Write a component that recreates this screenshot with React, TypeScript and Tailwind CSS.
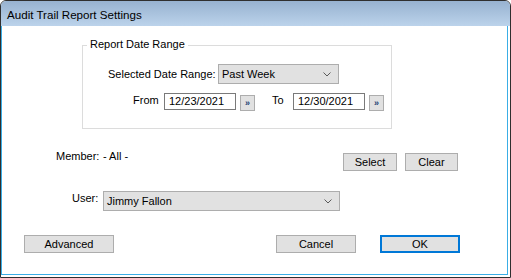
import React from "react";

function Chevron() {
  return (
    <svg width="8" height="5" viewBox="0 0 8 5" className="shrink-0">
      <path d="M0.5 0.5 L4 4 L7.5 0.5" fill="none" stroke="#5a5a5a" strokeWidth="1" />
    </svg>
  );
}

type SelectBoxProps = { value: string; width: string };

function SelectBox({ value, width }: SelectBoxProps) {
  return (
    <div
      className={`flex h-[20px] ${width} items-center justify-between border border-[#adadad] bg-[#e1e1e1] pl-[3px] pr-[7px]`}
    >
      <span className="leading-[13px]">{value}</span>
      <Chevron />
    </div>
  );
}

function DateInput({ value }: { value: string }) {
  return (
    <div className="flex h-[17px] w-[72px] items-center border border-[#7a7a7a] bg-white pl-[4px]">
      <span className="leading-[13px]">{value}</span>
    </div>
  );
}

function PickButton() {
  return (
    <div className="ml-[4px] mt-[2px] flex h-[16px] w-[15px] items-center justify-center border border-[#adadad] bg-[#e1e1e1]">
      <span className="text-[9px] font-bold leading-none text-[#1d3d73]">»</span>
    </div>
  );
}

type ButtonProps = { label: string; width: string; primary?: boolean };

function DlgButton({ label, width, primary }: ButtonProps) {
  return (
    <button
      type="button"
      className={`flex h-[18px] ${width} items-center justify-center bg-[#e1e1e1] leading-[13px] ${
        primary ? "border-2 border-[#0078d7]" : "border border-[#adadad]"
      }`}
    >
      {label}
    </button>
  );
}

export default function App() {
  return (
    <div className="h-[278px] w-[511px] overflow-hidden rounded-t-[6px] border border-[#2f2f2f] bg-white font-['Liberation_Sans',Arial,sans-serif] text-[11px] text-black">
      <div className="flex h-[25px] items-center bg-gradient-to-b from-[#97b2d0] to-[#bcd3eb] pl-[6px] pt-[2px]">
        <span className="text-[11.6px] leading-[14px]">Audit Trail Report Settings</span>
      </div>

      <div className="mb-[2px] mr-[2px] flex h-[249px] flex-col border-x border-b border-[#3aaee6]">
        {/* date range group */}
        <div className="relative ml-[80px] mt-[19px] h-[84px] w-[310px] border border-[#dcdcdc]">
          <span className="absolute -top-[8px] left-[4px] bg-white px-[3px] leading-[13px]">
            Report Date Range
          </span>
          <div className="ml-[25px] mt-[18px] flex items-center">
            <span className="w-[110px] leading-[13px]">Selected Date Range:</span>
            <SelectBox value="Past Week" width="w-[121px]" />
          </div>
          <div className="ml-[50px] mt-[9px] flex items-start">
            <span className="mt-[1px] w-[31px] leading-[13px]">From</span>
            <DateInput value="12/23/2021" />
            <PickButton />
            <span className="ml-[17px] mt-[1px] w-[21px] leading-[13px]">To</span>
            <DateInput value="12/30/2021" />
            <PickButton />
          </div>
        </div>

        {/* member */}
        <div className="ml-[54px] mt-[24px] flex items-start">
          <div className="-mt-[3px] flex w-[287px]">
            <span className="w-[47px] leading-[13px]">Member:</span>
            <span className="leading-[13px]">- All -</span>
          </div>
          <DlgButton label="Select" width="w-[54px]" />
          <div className="w-[8px]" />
          <DlgButton label="Clear" width="w-[53px]" />
        </div>

        {/* user */}
        <div className="ml-[70px] mt-[20px] flex items-center">
          <span className="-mt-[5px] w-[31px] leading-[13px]">User:</span>
          <SelectBox value="Jimmy Fallon" width="w-[237px]" />
        </div>

        {/* bottom buttons */}
        <div className="ml-[22px] mt-[24px] flex">
          <DlgButton label="Advanced" width="w-[90px]" />
          <div className="w-[162px]" />
          <DlgButton label="Cancel" width="w-[80px]" />
          <div className="w-[24px]" />
          <DlgButton label="OK" width="w-[80px]" primary />
        </div>
      </div>
    </div>
  );
}
